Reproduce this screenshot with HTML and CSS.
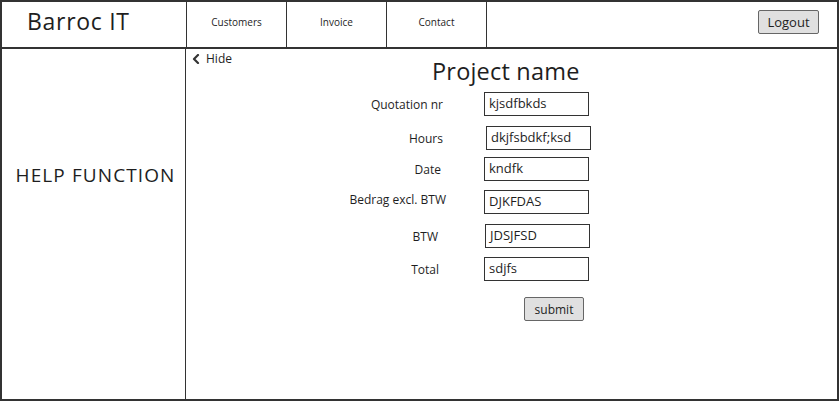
FILE: index.html
```html
<!DOCTYPE html>
<html>
<head>
<meta charset="utf-8">
<link rel="stylesheet" href="styles.css">
</head>
<body>
<div class="frame">
  <header class="topbar">
    <div class="logo">Barroc IT</div>
    <nav class="nav">
      <div class="nav-item">Customers</div>
      <div class="nav-item">Invoice</div>
      <div class="nav-item nav-item-wide">Contact</div>
    </nav>
    <div class="topbar-right">
      <button class="btn btn-logout">Logout</button>
    </div>
  </header>
  <div class="body">
    <aside class="sidebar">
      <div class="help">HELP FUNCTION</div>
    </aside>
    <main class="main">
      <div class="hide">
        <svg class="chev" width="8" height="10" viewBox="0 0 8 10"><path d="M6 1 L2 5 L6 9" fill="none" stroke="#333" stroke-width="2.2" stroke-linecap="round" stroke-linejoin="round"/></svg>
        <span>Hide</span>
      </div>
      <h1 class="title">Project name</h1>
      <div class="form">
        <div class="row"><span class="label">Quotation nr</span><span class="field">kjsdfbkds</span></div>
        <div class="row r2"><span class="label">Hours</span><span class="field field-shift2">dkjfsbdkf;ksd</span></div>
        <div class="row r3"><span class="label label-p8">Date</span><span class="field">kndfk</span></div>
        <div class="row r4"><span class="label label-p3 label-up">Bedrag excl. BTW</span><span class="field">DJKFDAS</span></div>
        <div class="row r5"><span class="label label-p11">BTW</span><span class="field field-shift1">JDSJFSD</span></div>
        <div class="row r6"><span class="label label-p10">Total</span><span class="field">sdjfs</span></div>
        <div class="row r7"><button class="btn btn-submit">submit</button></div>
      </div>
    </main>
  </div>
</div>
</body>
</html>
```

FILE: styles.css
```css
* { box-sizing: border-box; }
html, body { margin: 0; padding: 0; background: #fff; }
body {
  font-family: "Open Sans", "Noto Sans", sans-serif;
  color: #1e1e1e;
}
.frame {
  width: 839px;
  height: 401px;
  border: 2px solid #333;
  display: flex;
  flex-direction: column;
  overflow: hidden;
}
.topbar {
  height: 47px;
  flex: none;
  display: flex;
  border-bottom: 2px solid #333;
}
.logo {
  width: 184px;
  flex: none;
  padding-left: 25px;
  padding-top: 4px;
  font-size: 23px;
  letter-spacing: 0.7px;
  line-height: 30px;
}
.nav {
  display: flex;
  flex: none;
}
.nav-item {
  width: 100px;
  border-left: 1px solid #333;
  display: flex;
  align-items: center;
  justify-content: center;
  font-size: 10px;
  padding-bottom: 5px;
}
.nav-item-wide {
  width: 101px;
  border-right: 1px solid #333;
}
.topbar-right {
  flex: 1;
  display: flex;
  justify-content: flex-end;
  padding-top: 8px;
  padding-right: 18px;
}
.btn {
  font-family: inherit;
  color: #1e1e1e;
  background: #e0e0e0;
  border: 1px solid #666;
  border-radius: 2px;
  padding: 0;
  cursor: pointer;
}
.btn-logout {
  width: 61px;
  height: 24px;
  font-size: 13px;
}
.body {
  flex: 1;
  display: flex;
}
.sidebar {
  width: 184px;
  flex: none;
  border-right: 1px solid #333;
  display: flex;
  justify-content: center;
  padding-top: 114px;
}
.help {
  font-size: 19px;
  letter-spacing: 1.1px;
  line-height: 24px;
  height: 24px;
  padding-left: 4px;
}
.main {
  flex: 1;
  display: flex;
  flex-direction: column;
}
.hide {
  display: flex;
  align-items: center;
  gap: 6px;
  padding-left: 6px;
  padding-top: 3px;
  font-size: 12px;
  line-height: 14px;
}
.chev { display: block; }
.title {
  margin: -9px 0 0 0;
  font-weight: normal;
  font-size: 23.5px;
  letter-spacing: 0.2px;
  line-height: 28px;
  padding-left: 246px;
}
.form {
  display: flex;
  flex-direction: column;
  margin-top: 7px;
}
.row {
  display: flex;
  align-items: center;
  height: 24px;
}
.r2 { margin-top: 10px; }
.r3 { margin-top: 7px; }
.r4 { margin-top: 9px; }
.r5 { margin-top: 10px; }
.r6 { margin-top: 9px; }
.r7 { margin-top: 16px; padding-left: 338px; }
.label {
  width: 263px;
  padding-right: 6px;
  text-align: right;
  font-size: 12px;
  flex: none;
}
.label-p8 { padding-right: 8px; }
.label-p3 { padding-right: 3px; }
.label-p11 { padding-right: 11px; }
.label-p10 { padding-right: 10px; }
.label-up { margin-bottom: 6px; }
.field {
  margin-left: 35px;
  width: 105px;
  height: 24px;
  border: 1.5px solid #333;
  font-size: 13px;
  line-height: 20px;
  padding-left: 4px;
  padding-bottom: 2px;
}
.field-shift2 { margin-left: 37px; }
.field-shift1 { margin-left: 36px; }
.btn-submit {
  width: 60px;
  height: 24px;
  font-size: 12px;
}
```
